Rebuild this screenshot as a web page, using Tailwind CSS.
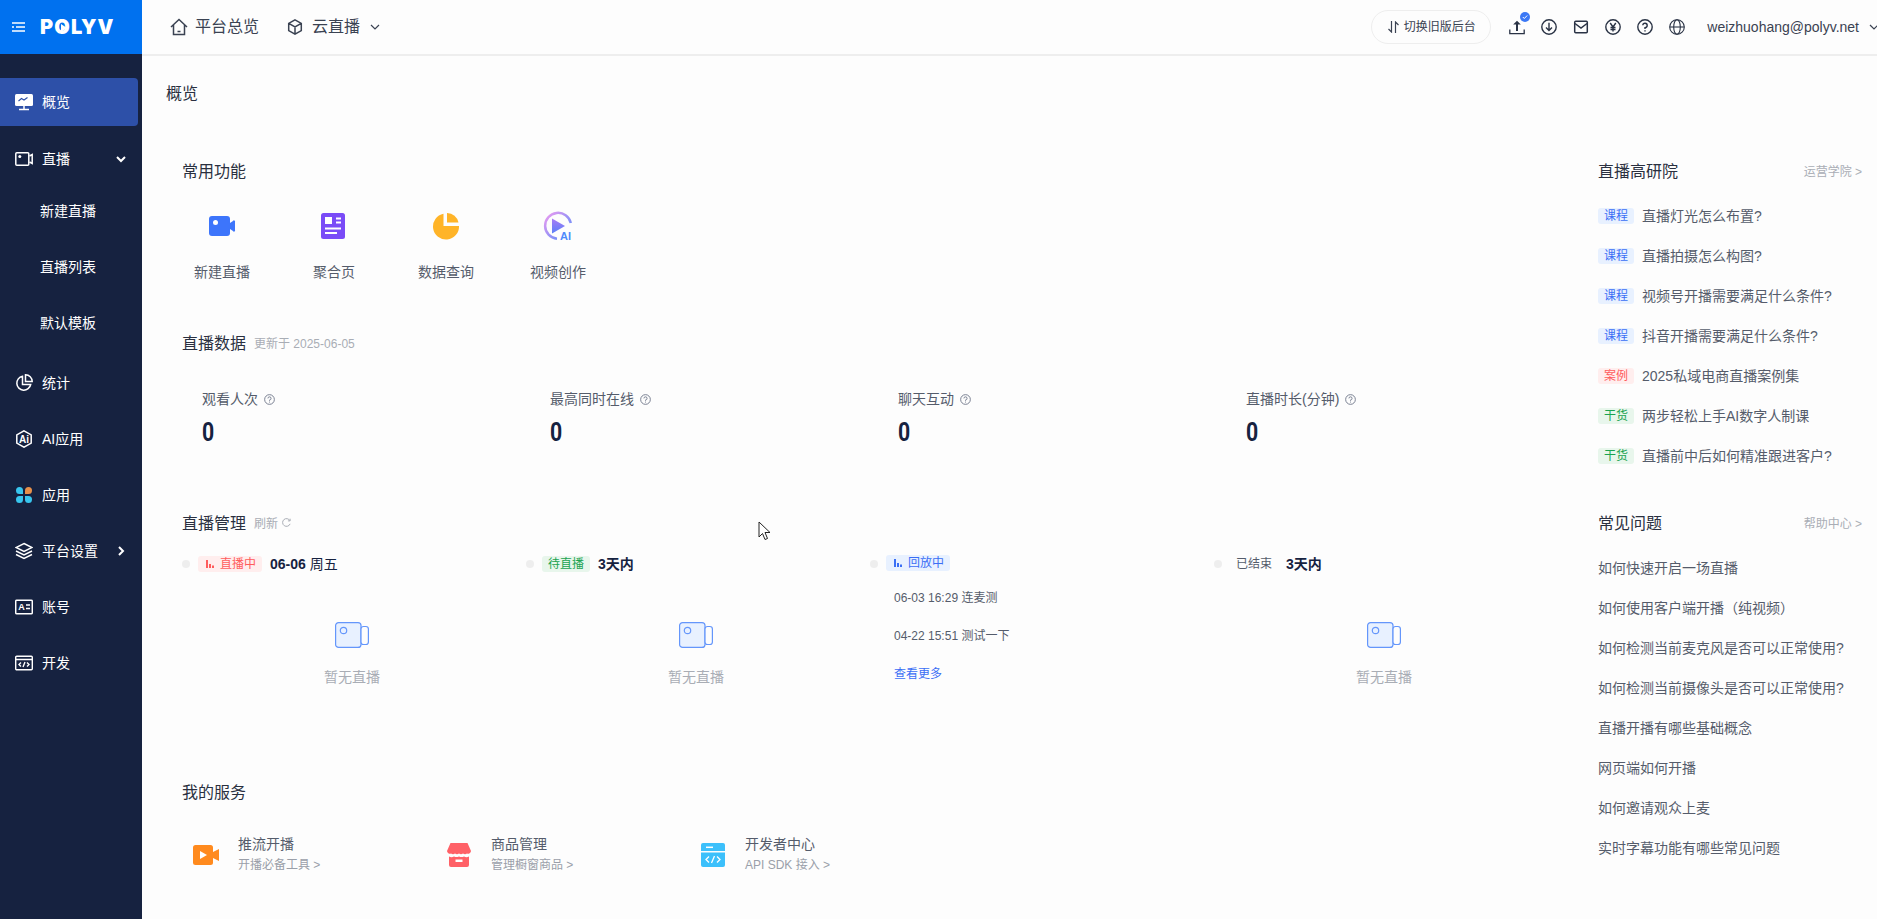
<!DOCTYPE html>
<html lang="zh-CN">
<head>
    <meta charset="UTF-8">
    <meta name="viewport" content="width=device-width, initial-scale=1.0">
    <script src="https://cdn.jsdelivr.net/npm/@tailwindcss/browser@4"></script>
    <title>POLYV 概览</title>
</head>
<body class="h-screen overflow-hidden flex bg-[#fdfdfd] text-[#555c6b] text-sm font-['Liberation_Sans','Noto_Sans_CJK_SC',sans-serif]">

    <!-- 侧边栏 -->
    <aside class="w-[142px] shrink-0 h-full bg-[#162240] text-white">
        <div class="h-[54px] bg-[#0071ef] flex items-center pl-[12px]">
            <svg class="w-[13px] h-[12px]" viewBox="0 0 13 12" fill="none" stroke="white" stroke-width="1.6"><path d="M0 2h13M4 6h9M0 10h13M0 6h2"/></svg>
            <span class="relative ml-[15px] text-[20px] leading-none font-black tracking-[1.2px] font-['Inter',sans-serif]">POLYV
                <svg class="absolute left-[21px] top-[6.5px] w-[6px] h-[8px]" viewBox="0 0 6 8" fill="white"><path d="M0 0l6 4-6 4z"/></svg>
            </span>
        </div>
        <nav class="mt-[24px] flex flex-col gap-2">
            <a class="h-12 w-[138px] mb-px bg-[#2d50a8] rounded-r-[4px] flex items-center pl-[15px] gap-[9px]">
                <svg class="w-[18px] h-[18px]" viewBox="0 0 18 18"><rect x="0" y="1" width="18" height="12" rx="1.5" fill="white"/><path d="M3.5 8l3-2.5 2.5 1.5 3.5-2.5" fill="none" stroke="#2d50a8" stroke-width="1.1"/><path d="M9 13v3M4 16.5h10" stroke="white" stroke-width="1.5"/></svg>
                <span>概览</span>
            </a>
            <a class="h-12 flex items-center pl-[15px] gap-[9px]">
                <svg class="w-[18px] h-[18px]" viewBox="0 0 18 18" fill="none" stroke="white" stroke-width="1.5"><rect x=".8" y="2.800" width="13" height="12.400" rx="1"/><path d="M14.500 6l2.700-1.500v9L14.500 12"/><circle cx="4.800" cy="6.600" r="1.500" fill="white" stroke="none"/></svg>
                <span>直播</span>
                <svg class="w-[10px] h-[7px] ml-[37px]" viewBox="0 0 10 7" fill="none" stroke="white" stroke-width="2"><path d="M1 1l4 4 4-4"/></svg>
            </a>
            <div class="-mt-1 mb-1 flex flex-col gap-2">
                <a class="h-12 flex items-center pl-[40px]">新建直播</a>
                <a class="h-12 flex items-center pl-[40px]">直播列表</a>
                <a class="h-12 flex items-center pl-[40px]">默认模板</a>
            </div>
            <a class="h-12 flex items-center pl-[15px] gap-[9px]">
                <svg class="w-[18px] h-[18px]" viewBox="0 0 18 18" fill="none" stroke="white" stroke-width="1.5"><path d="M7.500 2.300a7 7 0 1 0 8.200 8.200H7.500z"/><path d="M10.500 .8v6.700h6.700a6.700 6.700 0 0 0-6.700-6.700z"/></svg>
                <span>统计</span>
            </a>
            <a class="h-12 flex items-center pl-[15px] gap-[9px]">
                <svg class="w-[18px] h-[18px]" viewBox="0 0 18 18"><path d="M9 .8l7.200 4.100v8.200L9 17.200l-7.200-4.100V4.900z" fill="none" stroke="white" stroke-width="1.500"/><text x="9" y="12.800" text-anchor="middle" fill="white" font-size="10" font-weight="700">Ai</text></svg>
                <span>AI应用</span>
            </a>
            <a class="h-12 flex items-center pl-[15px] gap-[9px]">
                <svg class="w-[18px] h-[18px]" viewBox="0 0 18 18"><path d="M1 4.500a3.500 3.500 0 0 1 7 0V8H4.500A3.500 3.500 0 0 1 1 4.500z" fill="#38c6ee"/><path d="M10 4.500a3.500 3.500 0 1 1 3.500 3.500H10z" fill="#e8904a"/><path d="M1 13.500a3.500 3.500 0 0 1 3.500-3.500H8v3.500a3.500 3.500 0 0 1-7 0z" fill="#38c6ee"/><path d="M10 10h3.500a3.500 3.500 0 1 1-3.500 3.500z" fill="#38c6ee"/></svg>
                <span>应用</span>
            </a>
            <a class="h-12 flex items-center pl-[15px] gap-[9px]">
                <svg class="w-[18px] h-[18px]" viewBox="0 0 18 18" fill="none" stroke="white" stroke-width="1.400"><path d="M9 1.500l8 4-8 4-8-4z"/><path d="M1 9l8 4 8-4M1 12.500l8 4 8-4"/></svg>
                <span>平台设置</span>
                <svg class="w-[7px] h-[10px] ml-[11px]" viewBox="0 0 7 10" fill="none" stroke="white" stroke-width="2"><path d="M1 1l4 4-4 4"/></svg>
            </a>
            <a class="h-12 flex items-center pl-[15px] gap-[9px]">
                <svg class="w-[18px] h-[18px]" viewBox="0 0 18 18"><rect x=".7" y="2.200" width="16.600" height="13.600" rx="1" fill="none" stroke="white" stroke-width="1.500"/><text x="6.500" y="12.400" text-anchor="middle" fill="white" font-size="9" font-weight="700">A</text><path d="M11 7h4M11 10.500h4" stroke="white" stroke-width="1.500"/></svg>
                <span>账号</span>
            </a>
            <a class="h-12 flex items-center pl-[15px] gap-[9px]">
                <svg class="w-[18px] h-[18px]" viewBox="0 0 18 18" fill="none" stroke="white" stroke-width="1.400"><rect x=".7" y="2.200" width="16.600" height="13.600" rx="1"/><path d="M1 5.500h16M6 8.500l-2 2 2 2M12 8.500l2 2-2 2M10 8l-2 5"/></svg>
                <span>开发</span>
            </a>
        </nav>
    </aside>

    <div class="flex-1 min-w-0 flex flex-col">
        <!-- 顶栏 -->
        <header class="h-[56px] shrink-0 border-b-2 border-[#eeeeee] flex items-center text-[#3a4252] pb-px">
            <svg class="ml-[28px] w-[18px] h-[18px]" viewBox="0 0 18 18" fill="none" stroke="#3a4252" stroke-width="1.500"><path d="M1 9l8-7.500L17 9M3.500 7v9.500h11V7M7.500 13.500h3"/></svg>
            <span class="ml-[7px] text-base">平台总览</span>
            <svg class="ml-[28px] w-[16px] h-[16px]" viewBox="0 0 16 16" fill="none" stroke="#3a4252" stroke-width="1.500"><path d="M8 .9l6.300 3.500v7.200L8 15.100l-6.300-3.500V4.400zM1.700 4.400L8 8l6.300-3.600M8 8v7.100"/></svg>
            <span class="ml-[9px] text-base">云直播</span>
            <svg class="ml-[10px] w-[10px] h-[6px]" viewBox="0 0 10 6" fill="none" stroke="#3a4252" stroke-width="1.200"><path d="M1 1l4 4 4-4"/></svg>

            <div class="ml-auto h-[34px] w-[120px] pl-px rounded-full border border-[#eeeeee] flex items-center justify-center gap-[5px] text-xs">
                <svg class="w-[11px] h-[12px]" viewBox="0 0 11 12" fill="none" stroke="#3a4252" stroke-width="1.200"><path d="M3.500 0v11L.5 8M7.500 12V1l3 3"/></svg>
                <span>切换旧版后台</span>
            </div>
            <div class="ml-[18px] flex items-center gap-[16px]">
                <div class="relative w-[16px] h-[16px]">
                    <svg class="w-[16px] h-[16px]" viewBox="0 0 16 16" fill="none" stroke="#2a3345"><path d="M.8 10.500v4.200h14.400v-4.200" stroke-width="1.300"/><path d="M8 12V3" stroke-width="2"/><path d="M4.200 5.500L8 1.800l3.800 3.700z" fill="#2a3345" stroke="none"/></svg>
                    <span class="absolute -top-[7px] -right-[5px] w-[10px] h-[10px] rounded-full bg-[#3b78f5] flex items-center justify-center">
                        <svg class="w-[6px] h-[6px]" viewBox="0 0 6 6" fill="none" stroke="white" stroke-width="1"><path d="M.8 3l1.500 1.500L5.200 1.500"/></svg>
                    </span>
                </div>
                <svg class="w-[16px] h-[16px]" viewBox="0 0 16 16" fill="none" stroke="#2a3345" stroke-width="1.400"><circle cx="8" cy="8" r="7.200"/><path d="M8 3.800v7.600M5 8.500l3 3 3-3"/></svg>
                <svg class="w-[16px] h-[16px]" viewBox="0 0 16 16" fill="none" stroke="#2a3345" stroke-width="1.500"><rect x="1.700" y="2.200" width="12.600" height="11.600" rx="1"/><path d="M2 4.500l6 4.500 6-4.500"/></svg>
                <svg class="w-[16px] h-[16px]" viewBox="0 0 16 16" fill="none" stroke="#2a3345" stroke-width="1.400"><circle cx="8" cy="8" r="7.200"/><path d="M5.200 4l2.800 4 2.800-4M8 8v4.500M5.500 8.500h5M5.500 10.500h5"/></svg>
                <svg class="w-[16px] h-[16px]" viewBox="0 0 16 16" fill="none" stroke="#2a3345" stroke-width="1.400"><circle cx="8" cy="8" r="7.200"/><path d="M5.800 6.300A2.200 2.200 0 1 1 8 8.700v1.200M8 11.200v1.300"/></svg>
                <svg class="w-[16px] h-[16px]" viewBox="0 0 16 16" fill="none" stroke="#2a3345" stroke-width="1.100"><circle cx="8" cy="8" r="7.300"/><ellipse cx="8" cy="8" rx="3.300" ry="7.300"/><path d="M.8 8h14.400"/></svg>
            </div>
            <span class="ml-[22px] whitespace-nowrap">weizhuohang@polyv.net</span>
            <svg class="ml-[10px] -mr-[2px] w-[10px] h-[6px]" viewBox="0 0 10 6" fill="none" stroke="#3a4252" stroke-width="1.200"><path d="M1 1l4 4 4-4"/></svg>
        </header>

        <main class="flex-1 min-h-0 flex relative">
            <!-- 左侧内容 -->
            <div class="flex-1 min-w-0 pl-[24px] pt-[25px]">
                <h1 class="h-6 leading-[26px] text-base text-[#2a3040]">概览</h1>

                <div class="pl-[16px]">
                    <h2 class="mt-[54px] h-6 leading-[26px] text-base text-[#2a3040]">常用功能</h2>
                    <div class="-ml-[16px] mt-[29px] flex">
                        <div class="w-[112px] flex flex-col items-center">
                            <svg class="w-[28px] h-[28px]" viewBox="0 0 28 28"><rect x="1" y="4" width="21" height="20" rx="3" fill="#3d75fb"/><path d="M22 11l3-2a1 1 0 0 1 2 1v8a1 1 0 0 1-2 1l-3-2z" fill="#3d75fb"/><circle cx="7.500" cy="10.500" r="2.500" fill="white"/></svg>
                            <span class="mt-[22px] h-5 leading-5">新建直播</span>
                        </div>
                        <div class="w-[112px] flex flex-col items-center">
                            <svg class="w-[28px] h-[28px]" viewBox="0 0 28 28"><rect x="1" y="1" width="24" height="26" rx="2.500" fill="#7a4bf7"/><rect x="5" y="5" width="7" height="7" fill="white"/><path d="M16 6.500h5M16 10.500h5M5 16.500h16M5 21h12" stroke="white" stroke-width="1.800"/></svg>
                            <span class="mt-[22px] h-5 leading-5">聚合页</span>
                        </div>
                        <div class="w-[112px] flex flex-col items-center">
                            <svg class="w-[28px] h-[28px]" viewBox="0 0 28 28"><path d="M11.500 1.800A13 13 0 1 0 27 14H11.500z" fill="#ffb428"/><path d="M15 1v9.500h11.500A11.500 11.500 0 0 0 15 1z" fill="#ffb428"/></svg>
                            <span class="mt-[22px] h-5 leading-5">数据查询</span>
                        </div>
                        <div class="w-[112px] flex flex-col items-center">
                            <svg class="w-[30px] h-[30px] -mt-px -mb-px" viewBox="0 0 30 30">
                                <defs>
                                    <linearGradient id="aiRing" x1="0" y1="0" x2="1" y2="1"><stop offset="0" stop-color="#ef9bf0"/><stop offset="1" stop-color="#4f8bfb"/></linearGradient>
                                    <linearGradient id="aiPlay" x1="0" y1="0" x2="0" y2="1"><stop offset="0" stop-color="#a97cf5"/><stop offset="1" stop-color="#5a80f8"/></linearGradient>
                                </defs>
                                <path d="M27.800 12A13 13 0 1 0 14 27.800" fill="none" stroke="url(#aiRing)" stroke-width="2.500"/>
                                <path d="M9 7.500l13 7.500-13 7.500z" fill="url(#aiPlay)"/>
                                <text x="22.500" y="28.500" text-anchor="middle" fill="#4f8bfb" font-size="11" font-weight="700">AI</text>
                            </svg>
                            <span class="mt-[22px] h-5 leading-5">视频创作</span>
                        </div>
                    </div>

                    <div class="mt-[49px] h-6 pt-[2px] flex items-center gap-[8px]">
                        <h2 class="text-base text-[#2a3040]">直播数据</h2>
                        <span class="text-xs text-[#a9adb5]">更新于 2025-06-05</span>
                    </div>
                    <div class="mt-[34px] pl-[20px] flex">
                        <div class="w-[348px]">
                            <div class="h-5 flex items-center gap-[6px]">观看人次
                                <svg class="w-[11px] h-[11px]" viewBox="0 0 12 12" fill="none" stroke="#70778a"><circle cx="6" cy="6" r="5.300"/><path d="M4.300 4.800A1.700 1.700 0 1 1 6 6.500v.8M6 8.300v1"/></svg>
                            </div>
                            <div class="mt-[8px] h-8 w-fit origin-left scale-x-[.85] leading-8 text-[25px] font-bold text-[#162240] font-['Roboto',sans-serif]">0</div>
                        </div>
                        <div class="w-[348px]">
                            <div class="h-5 flex items-center gap-[6px]">最高同时在线
                                <svg class="w-[11px] h-[11px]" viewBox="0 0 12 12" fill="none" stroke="#70778a"><circle cx="6" cy="6" r="5.300"/><path d="M4.300 4.800A1.700 1.700 0 1 1 6 6.500v.8M6 8.300v1"/></svg>
                            </div>
                            <div class="mt-[8px] h-8 w-fit origin-left scale-x-[.85] leading-8 text-[25px] font-bold text-[#162240] font-['Roboto',sans-serif]">0</div>
                        </div>
                        <div class="w-[348px]">
                            <div class="h-5 flex items-center gap-[6px]">聊天互动
                                <svg class="w-[11px] h-[11px]" viewBox="0 0 12 12" fill="none" stroke="#70778a"><circle cx="6" cy="6" r="5.300"/><path d="M4.300 4.800A1.700 1.700 0 1 1 6 6.500v.8M6 8.300v1"/></svg>
                            </div>
                            <div class="mt-[8px] h-8 w-fit origin-left scale-x-[.85] leading-8 text-[25px] font-bold text-[#162240] font-['Roboto',sans-serif]">0</div>
                        </div>
                        <div class="w-[300px]">
                            <div class="h-5 flex items-center gap-[6px]">直播时长(分钟)
                                <svg class="w-[11px] h-[11px]" viewBox="0 0 12 12" fill="none" stroke="#70778a"><circle cx="6" cy="6" r="5.300"/><path d="M4.300 4.800A1.700 1.700 0 1 1 6 6.500v.8M6 8.300v1"/></svg>
                            </div>
                            <div class="mt-[8px] h-8 w-fit origin-left scale-x-[.85] leading-8 text-[25px] font-bold text-[#162240] font-['Roboto',sans-serif]">0</div>
                        </div>
                    </div>

                    <div class="mt-[62px] h-6 pt-[2px] flex items-center gap-[8px]">
                        <h2 class="text-base text-[#2a3040]">直播管理</h2>
                        <span class="text-xs text-[#a9adb5]">刷新</span>
                        <svg class="-ml-[4px] -mt-[3px] w-[9px] h-[9px]" viewBox="0 0 10 10" fill="none" stroke="#a9adb5" stroke-width="1.100"><path d="M8.800 3A4.300 4.300 0 1 0 9 6.500M9 .8V3.200H6.600"/></svg>
                    </div>
                    <div class="-ml-[2px] mt-[19px] grid grid-cols-[344px_344px_344px_344px] h-[132px]">
                        <!-- 直播中 -->
                        <div class="flex flex-col">
                            <div class="h-5 flex items-center pl-[2px]">
                                <span class="w-2 h-2 rounded-full bg-[#eeeeee]"></span>
                                <span class="ml-2 w-[64px] h-4 rounded-[3px] bg-[#ffeeee] text-[#ff5c5c] text-xs flex items-center pl-2 gap-[6px]">
                                    <svg class="w-[8px] h-[8px]" viewBox="0 0 8 8" fill="currentColor"><rect width="2" height="8"/><rect x="3" y="4" width="2" height="4"/><rect x="6" y="5.500" width="2" height="2.500"/></svg>
                                    直播中
                                </span>
                                <span class="ml-2 font-bold text-[#162240]">06-06</span>
                                <span class="ml-1 text-[#162240]">周五</span>
                            </div>
                            <svg class="self-center mt-[48px] w-[34px] h-[26px]" viewBox="0 0 34 26" fill="#e8f1ff" stroke="#6496fb" stroke-width="1.200"><rect x=".6" y=".6" width="25.400" height="24.800" rx="3"/><rect x="26" y="4.500" width="7.400" height="18" rx="2.500" fill="#fdfdfd"/><circle cx="8.500" cy="8.500" r="3.200" fill="#e8f1ff"/></svg>
                            <span class="self-center mt-[18px] h-5 leading-[22px] text-[#a9adb5]">暂无直播</span>
                        </div>
                        <!-- 待直播 -->
                        <div class="flex flex-col">
                            <div class="h-5 flex items-center pl-[2px]">
                                <span class="w-2 h-2 rounded-full bg-[#eeeeee]"></span>
                                <span class="ml-2 w-[48px] h-4 leading-4 text-center rounded-[3px] bg-[#e8f6ec] text-[#1aa350] text-xs">待直播</span>
                                <span class="ml-2 font-bold text-[#162240]">3天内</span>
                            </div>
                            <svg class="self-center mt-[48px] w-[34px] h-[26px]" viewBox="0 0 34 26" fill="#e8f1ff" stroke="#6496fb" stroke-width="1.200"><rect x=".6" y=".6" width="25.400" height="24.800" rx="3"/><rect x="26" y="4.500" width="7.400" height="18" rx="2.500" fill="#fdfdfd"/><circle cx="8.500" cy="8.500" r="3.200" fill="#e8f1ff"/></svg>
                            <span class="self-center mt-[18px] h-5 leading-[22px] text-[#a9adb5]">暂无直播</span>
                        </div>
                        <!-- 回放中 -->
                        <div class="flex flex-col">
                            <div class="h-5 flex items-center pl-[2px]">
                                <span class="w-2 h-2 rounded-full bg-[#eeeeee]"></span>
                                <span class="ml-2 mb-[2px] w-[64px] h-4 rounded-[3px] bg-[#e8f1ff] text-[#3b6ff5] text-xs flex items-center pl-2 gap-[6px]">
                                    <svg class="w-[8px] h-[8px]" viewBox="0 0 8 8" fill="currentColor"><rect width="2" height="8"/><rect x="3" y="4" width="2" height="4"/><rect x="6" y="5.500" width="2" height="2.500"/></svg>
                                    回放中
                                </span>
                            </div>
                            <div class="mt-[13px] pl-[26px] flex flex-col gap-[18px] text-xs">
                                <span class="h-5 leading-[22px]">06-03 16:29 连麦测</span>
                                <span class="h-5 leading-[22px]">04-22 15:51 测试一下</span>
                                <a class="h-5 leading-[22px] text-[#3b6ff5]">查看更多</a>
                            </div>
                        </div>
                        <!-- 已结束 -->
                        <div class="flex flex-col">
                            <div class="h-5 flex items-center pl-[2px]">
                                <span class="w-2 h-2 rounded-full bg-[#eeeeee]"></span>
                                <span class="ml-2 w-[48px] h-4 leading-4 text-center text-xs">已结束</span>
                                <span class="ml-2 font-bold text-[#162240]">3天内</span>
                            </div>
                            <svg class="self-center mt-[48px] w-[34px] h-[26px]" viewBox="0 0 34 26" fill="#e8f1ff" stroke="#6496fb" stroke-width="1.200"><rect x=".6" y=".6" width="25.400" height="24.800" rx="3"/><rect x="26" y="4.500" width="7.400" height="18" rx="2.500" fill="#fdfdfd"/><circle cx="8.500" cy="8.500" r="3.200" fill="#e8f1ff"/></svg>
                            <span class="self-center mt-[18px] h-5 leading-[22px] text-[#a9adb5]">暂无直播</span>
                        </div>
                    </div>

                    <h2 class="mt-[94px] h-6 leading-[26px] text-base text-[#2a3040]">我的服务</h2>
                    <div class="mt-[30px] pl-[11px] flex">
                        <div class="w-[254px] flex items-center gap-[19px]">
                            <svg class="w-[26px] h-[20px]" viewBox="0 0 26 20"><rect x="0" y="0" width="20" height="20" rx="2.500" fill="#ff8a1e"/><path d="M20 7l6-3v12l-6-3z" fill="#ff8a1e"/><path d="M7 6l7 4-7 4z" fill="white"/></svg>
                            <div>
                                <div class="h-5 leading-5">推流开播</div>
                                <div class="h-5 leading-5 mt-px text-xs text-[#9a9fa9]">开播必备工具 &gt;</div>
                            </div>
                        </div>
                        <div class="w-[254px] flex items-center gap-[20px]">
                            <svg class="w-[24px] h-[24px]" viewBox="0 0 24 24" fill="#ff6167"><path d="M3.500 0h17L24 8a3 3 0 0 1-4 2.600 4 4 0 0 1-4 0 4 4 0 0 1-4 0 4 4 0 0 1-4 0 4 4 0 0 1-4 0A3 3 0 0 1 0 8z"/><path d="M2 13.500a5 5 0 0 0 5 0 6 6 0 0 0 5 0 6 6 0 0 0 5 0 5 5 0 0 0 5 0V22a2 2 0 0 1-2 2H4a2 2 0 0 1-2-2z"/><rect x="8.500" y="16.500" width="7" height="2.500" fill="white"/></svg>
                            <div>
                                <div class="h-5 leading-5">商品管理</div>
                                <div class="h-5 leading-5 mt-px text-xs text-[#9a9fa9]">管理橱窗商品 &gt;</div>
                            </div>
                        </div>
                        <div class="flex items-center gap-[20px]">
                            <svg class="w-[24px] h-[24px]" viewBox="0 0 24 24"><path d="M2 0h20a2 2 0 0 1 2 2v6H0V2a2 2 0 0 1 2-2z" fill="#3cc0fb"/><path d="M0 9.500h24V22a2 2 0 0 1-2 2H2a2 2 0 0 1-2-2z" fill="#3cc0fb"/><path d="M5 4.300h7" stroke="white" stroke-width="1.500"/><path d="M8 13.500l-3 3 3 3M16 13.500l3 3-3 3M13.500 13l-3 7" fill="none" stroke="white" stroke-width="1.300"/></svg>
                            <div>
                                <div class="h-5 leading-5">开发者中心</div>
                                <div class="h-5 leading-5 mt-px text-xs text-[#9a9fa9]">API SDK 接入 &gt;</div>
                            </div>
                        </div>
                    </div>
                </div>
            </div>

            <!-- 右侧栏 -->
            <div class="w-[264px] shrink-0 mr-[15px] pt-[103px]">
                <div class="h-6 pt-[2px] flex items-center justify-between">
                    <h2 class="text-base text-[#2a3040]">直播高研院</h2>
                    <span class="text-xs text-[#a9adb5]">运营学院 &gt;</span>
                </div>
                <ul class="mt-[23px] flex flex-col gap-5">
                    <li class="h-5 flex items-center gap-2 whitespace-nowrap"><span class="w-9 h-4 leading-4 text-center rounded-[3px] text-xs bg-[#e8f1ff] text-[#3b6ff5]">课程</span>直播灯光怎么布置?</li>
                    <li class="h-5 flex items-center gap-2 whitespace-nowrap"><span class="w-9 h-4 leading-4 text-center rounded-[3px] text-xs bg-[#e8f1ff] text-[#3b6ff5]">课程</span>直播拍摄怎么构图?</li>
                    <li class="h-5 flex items-center gap-2 whitespace-nowrap"><span class="w-9 h-4 leading-4 text-center rounded-[3px] text-xs bg-[#e8f1ff] text-[#3b6ff5]">课程</span>视频号开播需要满足什么条件?</li>
                    <li class="h-5 flex items-center gap-2 whitespace-nowrap"><span class="w-9 h-4 leading-4 text-center rounded-[3px] text-xs bg-[#e8f1ff] text-[#3b6ff5]">课程</span>抖音开播需要满足什么条件?</li>
                    <li class="h-5 flex items-center gap-2 whitespace-nowrap"><span class="w-9 h-4 leading-4 text-center rounded-[3px] text-xs bg-[#ffeeee] text-[#ff5c5c]">案例</span>2025私域电商直播案例集</li>
                    <li class="h-5 flex items-center gap-2 whitespace-nowrap"><span class="w-9 h-4 leading-4 text-center rounded-[3px] text-xs bg-[#e8f6ec] text-[#1aa350]">干货</span>两步轻松上手AI数字人制课</li>
                    <li class="h-5 flex items-center gap-2 whitespace-nowrap"><span class="w-9 h-4 leading-4 text-center rounded-[3px] text-xs bg-[#e8f6ec] text-[#1aa350]">干货</span>直播前中后如何精准跟进客户?</li>
                </ul>

                <div class="mt-[45px] h-6 pt-[2px] flex items-center justify-between">
                    <h2 class="text-base text-[#2a3040]">常见问题</h2>
                    <span class="text-xs text-[#a9adb5]">帮助中心 &gt;</span>
                </div>
                <ul class="mt-[23px] flex flex-col gap-5 whitespace-nowrap">
                    <li class="h-5 leading-5">如何快速开启一场直播</li>
                    <li class="h-5 leading-5">如何使用客户端开播（纯视频）</li>
                    <li class="h-5 leading-5">如何检测当前麦克风是否可以正常使用?</li>
                    <li class="h-5 leading-5">如何检测当前摄像头是否可以正常使用?</li>
                    <li class="h-5 leading-5">直播开播有哪些基础概念</li>
                    <li class="h-5 leading-5">网页端如何开播</li>
                    <li class="h-5 leading-5">如何邀请观众上麦</li>
                    <li class="h-5 leading-5">实时字幕功能有哪些常见问题</li>
                </ul>
            </div>

            <!-- 鼠标指针 -->
            <svg class="absolute left-[616px] top-[465px] w-[13px] h-[21px]" viewBox="0 0 13 21" fill="white" stroke="#222" stroke-width="1"><path d="M1 1v15l3.500-3.500 2.500 6 2.500-1-2.500-6h5z"/></svg>
        </main>
    </div>
</body>
</html>
